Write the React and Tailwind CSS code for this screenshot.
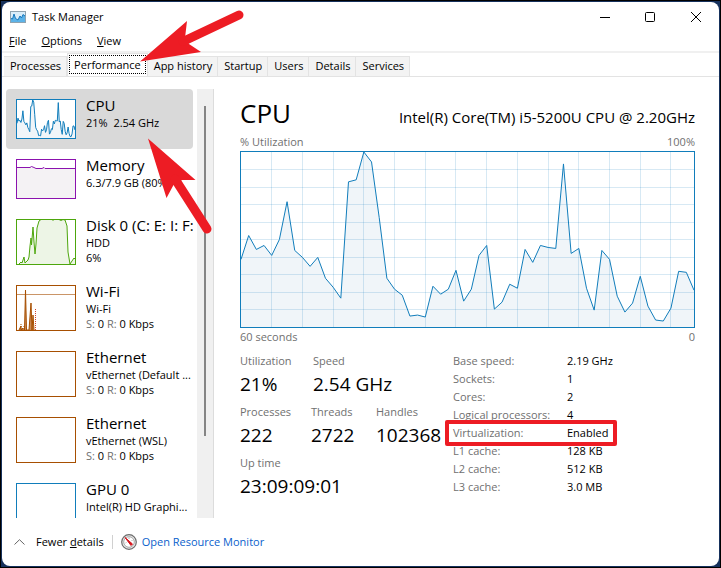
import { useState } from 'react';

// one sample per second, as distance from the top of a 176 unit high plot
const cpuSamples = [
  108, 84, 98, 94, 104, 88, 50, 99, 106, 115, 106, 127, 136, 147, 30, 28, 0, 10, 66, 127,
  138, 144, 165, 164, 166, 135, 143, 138, 119, 150, 138, 104, 94, 158, 151, 133, 137, 98, 111, 94,
  96, 97, 12, 102, 97, 137, 159, 99, 108, 145, 161, 152, 125, 155, 169, 170, 157, 120, 121, 139,
];

const cpuLine = cpuSamples.map((y, i) => `${i * 10},${y}`).join(' ');

const tabs = ['Processes', 'Performance', 'App history', 'Startup', 'Users', 'Details', 'Services'];

const devices = [
  { id: 'cpu', title: 'CPU', lines: ['21%  2.54 GHz'], chart: 'cpu' },
  { id: 'memory', title: 'Memory', lines: ['6.3/7.9 GB (80%)'], chart: 'memory' },
  { id: 'disk', title: 'Disk 0 (C: E: I: F:', lines: ['HDD', '6%'], chart: 'disk' },
  { id: 'wifi', title: 'Wi-Fi', lines: ['Wi-Fi'], net: true, chart: 'wifi' },
  { id: 'eth0', title: 'Ethernet', lines: ['vEthernet (Default ...'], net: true, chart: 'ethernet' },
  { id: 'eth1', title: 'Ethernet', lines: ['vEthernet (WSL)'], net: true, chart: 'ethernet' },
  { id: 'gpu', title: 'GPU 0', lines: ['Intel(R) HD Graphi...', '22%'], chart: 'gpu' },
];

const details = [
  ['Base speed:', '2.19 GHz'],
  ['Sockets:', '1'],
  ['Cores:', '2'],
  ['Logical processors:', '4'],
  ['Virtualization:', 'Enabled'],
  ['L1 cache:', '128 KB'],
  ['L2 cache:', '512 KB'],
  ['L3 cache:', '3.0 MB'],
];

function CpuPlot({ grid }) {
  return (
    <svg viewBox="0 0 590 176" preserveAspectRatio="none" className="block h-full w-full">
      <polygon points={`0,176 ${cpuLine} 590,176`} fill="#f0f5f9" />
      {grid && (
        <g stroke="#117dbb" strokeOpacity="0.17" shapeRendering="crispEdges">
          {Array.from({ length: 14 }, (_, i) => (
            <line key={`v${i}`} x1={(i + 1) * 40} x2={(i + 1) * 40} y1="0" y2="176" vectorEffect="non-scaling-stroke" />
          ))}
          {Array.from({ length: 9 }, (_, i) => (
            <line key={`h${i}`} x1="0" x2="590" y1={(i + 1) * 17.6} y2={(i + 1) * 17.6} vectorEffect="non-scaling-stroke" />
          ))}
        </g>
      )}
      <polyline points={cpuLine} fill="none" stroke="#117dbb" vectorEffect="non-scaling-stroke" />
    </svg>
  );
}

function Thumb({ chart }) {
  if (chart === 'cpu') {
    return (
      <div className="h-10 w-[60px] shrink-0 border border-[#117dbb] bg-white">
        <CpuPlot />
      </div>
    );
  }
  if (chart === 'memory') {
    return (
      <div className="h-10 w-[60px] shrink-0 border border-[#8b12ae] bg-white">
        <svg viewBox="0 0 58 38" className="block h-full w-full">
          <path d="M0 7.5H13L14.5 6.5L17 7.5L19 8.5H25L27 7.5L28 8.5H58V38H0Z" fill="#f4f2f4" />
          <path d="M0 7.5H13L14.5 6.5L17 7.5L19 8.5H25L27 7.5L28 8.5H58" fill="none" stroke="#8b12ae" />
        </svg>
      </div>
    );
  }
  if (chart === 'disk') {
    const disk =
      'M2 44L4 42L5 43L7 37L8 43L11 40L12 37L13 26L14 18L14.5 25L16 7L17 22L18 34L19 24L20 8L22 1L24 -0.5H35L36 0.5L37 -0.5H42L44 0.5L46 -0.5L48 0L50 6L51 32L53 44L55 41L57 38L58 39';
    return (
      <div className="h-[46px] w-[60px] shrink-0 border border-[#4da60c] bg-white">
        <svg viewBox="0 0 58 44" className="block h-full w-full">
          <path d={`${disk}V44Z`} fill="#edf5e6" />
          <path d={disk} fill="none" stroke="#4da60c" />
        </svg>
      </div>
    );
  }
  if (chart === 'wifi') {
    return (
      <div className="h-[46px] w-[60px] shrink-0 border border-[#a74f01] bg-white">
        <svg viewBox="0 0 58 44" className="block h-full w-full" fill="none" stroke="#a74f01">
          <path d="M0 8.5H58" strokeOpacity="0.6" />
          <path d="M2 44L4 40V44L6 42V44H7.5L8.5 4L9.5 44H12L14 17L15 44L16 29L17 44" fill="#c98a58" />
          <path d="M18.5 44V22" strokeDasharray="1 1" stroke="#d0452b" />
          <path d="M4 43V38M7 43V40" strokeDasharray="1 1" />
        </svg>
      </div>
    );
  }
  if (chart === 'gpu') {
    return <div className="h-[46px] w-[60px] shrink-0 border border-[#117dbb] bg-white" />;
  }
  return <div className="h-[46px] w-[60px] shrink-0 border border-[#a74f01] bg-white" />;
}

function DeviceItem({ device, selected, onSelect }) {
  return (
    <button
      onClick={onSelect}
      className={`flex w-full shrink-0 gap-[10px] rounded-sm py-[10px] pl-[10px] text-left ${selected ? 'bg-[#d9d9d9]' : ''}`}
    >
      <Thumb chart={device.chart} />
      <span className="-mt-1 -mb-2 block min-w-0 flex-1 whitespace-pre">
        <span className="block text-[15px] leading-5">{device.title}</span>
        {device.lines.map((line) => (
          <span key={line} className="block leading-[15px]">{line}</span>
        ))}
        {device.net && (
          <span className="block leading-[15px]">
            <span className="text-[#707070]">S:</span> 0 <span className="text-[#707070]">R:</span> 0 Kbps
          </span>
        )}
      </span>
    </button>
  );
}

function Stat({ label, value }) {
  return (
    <div className="mb-1">
      <div className="leading-[18px] text-[#707070]">{label}</div>
      <div className="text-[19px] leading-[29px]">{value}</div>
    </div>
  );
}

function AppIcon() {
  return (
    <svg viewBox="0 0 16 12" className="h-3 w-4">
      <rect x="0.5" y="0.5" width="15" height="11" fill="#d9edf9" stroke="#8fa3b0" />
      <path d="M1 11V7L2.5 8L4 3L5.5 7.5L8 9L10 5L11.5 7L13 3.5L15 5V11Z" fill="#5cb3e8" />
      <path d="M1 7.5L2.5 8L4 3L5.5 7.5L8 9L10 5L11.5 7L13 3.5L15 5" fill="none" stroke="#1878bd" />
    </svg>
  );
}

function MonitorIcon() {
  return (
    <svg viewBox="0 0 16 16" className="h-4 w-4">
      <circle cx="8" cy="8" r="7.3" fill="#e8e8e8" stroke="#6c6c6c" strokeWidth="1.2" />
      <circle cx="8" cy="8" r="5.3" fill="#fff" stroke="#a8a8a8" />
      <path d="M4.5 9L5.5 8.5M8 3.5V5M11.5 6L10.5 7" stroke="#999" strokeWidth="0.8" />
      <path d="M4 3.5L11.5 10L10 11.5Z" fill="#d4141c" stroke="#d4141c" />
    </svg>
  );
}

export default function App() {
  const [tab, setTab] = useState('Performance');
  const [selected, setSelected] = useState('cpu');

  return (
    <div className="h-screen bg-black p-px font-['Open_Sans','Noto_Sans',sans-serif] text-[11px] text-black">
      <div className="relative h-full bg-[#16315c] p-px">
        <div className="flex h-full flex-col overflow-hidden rounded-lg bg-white">
          <header className="flex h-[30px] shrink-0 items-center pl-2">
            <AppIcon />
            <h1 className="ml-[6px] flex-1">Task Manager</h1>
            <button aria-label="Minimize" className="flex h-full w-[45px] items-center justify-center">
              <svg viewBox="0 0 10 10" className="h-[10px] w-[10px]" stroke="#000"><path d="M0 5.5H10" /></svg>
            </button>
            <button aria-label="Maximize" className="flex h-full w-[45px] items-center justify-center">
              <svg viewBox="0 0 10 10" className="h-[10px] w-[10px]" fill="none" stroke="#000">
                <rect x="0.5" y="0.5" width="9" height="9" rx="1" />
              </svg>
            </button>
            <button aria-label="Close" className="flex h-full w-[47px] items-center justify-center">
              <svg viewBox="0 0 10 10" className="h-[10px] w-[10px]" stroke="#000"><path d="M0 0L10 10M10 0L0 10" /></svg>
            </button>
          </header>

          <nav className="flex h-[21px] shrink-0 items-center gap-[15px] border-b-2 border-[#f0f0f0] pl-[7px]">
            <button><u>F</u>ile</button>
            <button><u>O</u>ptions</button>
            <button><u>V</u>iew</button>
          </nav>

          <div role="tablist" className="flex h-6 shrink-0 items-end border-b border-[#e3e3e3] pl-[2px]">
            {tabs.map((name) => (
              <button
                key={name}
                role="tab"
                aria-selected={tab === name}
                onClick={() => setTab(name)}
                className={
                  tab === name
                    ? 'h-[23px] border-x border-t border-[#e3e3e3] bg-white px-px pb-[2px]'
                    : 'h-5 border-t border-r border-[#e3e3e3] bg-[#f3f3f3] pr-[5px] pl-[6px]'
                }
              >
                {tab === name ? (
                  <span className="block border border-dotted border-black px-1 leading-[17px]">{name}</span>
                ) : (
                  name
                )}
              </button>
            ))}
          </div>

          <main className="flex min-h-0 flex-1 pt-3">
            <aside className="flex w-[212px] shrink-0 gap-1 pl-1">
              <div className="flex min-w-0 flex-1 flex-col overflow-hidden">
                {devices.map((device) => (
                  <DeviceItem
                    key={device.id}
                    device={device}
                    selected={selected === device.id}
                    onSelect={() => setSelected(device.id)}
                  />
                ))}
              </div>
              <div className="flex w-[17px] justify-center border-r border-[#dcdcdc] bg-[#f0f0f0] pt-[17px]">
                <div className="h-[80%] w-[2px] bg-[#858585]" />
              </div>
            </aside>

            <section className="min-w-0 flex-1 overflow-hidden pr-6 pl-[26px]">
              <div className="flex items-baseline justify-between pt-1">
                <h2 className="text-[26px] leading-[40px]">CPU</h2>
                <p className="text-[15px]">Intel(R) Core(TM) i5-5200U CPU @ 2.20GHz</p>
              </div>
              <div className="flex justify-between leading-[18px] text-[#707070]">
                <span>% Utilization</span>
                <span>100%</span>
              </div>
              <div className="h-[177px] border border-[#117dbb]">
                <CpuPlot grid />
              </div>
              <div className="flex justify-between leading-[18px] text-[#707070]">
                <span>60 seconds</span>
                <span>0</span>
              </div>

              <div className="mt-[6px] flex">
                <div className="w-[213px] shrink-0">
                  <div className="flex">
                    <div className="w-[73px]"><Stat label="Utilization" value="21%" /></div>
                    <Stat label="Speed" value="2.54 GHz" />
                  </div>
                  <div className="flex">
                    <div className="w-[71px]"><Stat label="Processes" value="222" /></div>
                    <div className="w-[65px]"><Stat label="Threads" value="2722" /></div>
                    <Stat label="Handles" value="102368" />
                  </div>
                  <Stat label="Up time" value="23:09:09:01" />
                </div>
                <table className="h-36 w-[156px] self-start leading-[18px]">
                  <tbody>
                    {details.map(([label, value]) => (
                      <tr key={label} className="relative">
                        <th scope="row" className="w-[114px] p-0 text-left font-normal whitespace-nowrap text-[#707070]">
                          {label}
                        </th>
                        <td className="p-0">
                          <span className="block w-10 whitespace-nowrap">{value}</span>
                          {label === 'Virtualization:' && (
                            <span className="absolute -inset-x-2 -inset-y-1 rounded-xs border-4 border-[#ed1c24]" />
                          )}
                        </td>
                      </tr>
                    ))}
                  </tbody>
                </table>
              </div>
            </section>
          </main>

          <footer className="flex h-12 shrink-0 items-center pl-3">
            <button className="flex items-center gap-[11px]">
              <svg viewBox="0 0 11 6" className="h-[6px] w-[11px]" fill="none" stroke="#666">
                <path d="M0.5 5.5L5.5 0.7L10.5 5.5" />
              </svg>
              <span>Fewer <u>d</u>etails</span>
            </button>
            <span className="mx-2 h-[14px] w-px bg-[#d0d0d0]" />
            <a href="#resource-monitor" className="flex items-center gap-[5px] text-[#0a5fcc]">
              <MonitorIcon />
              Open Resource Monitor
            </a>
          </footer>
        </div>
      </div>

      {/* callout arrows */}
      <svg viewBox="0 0 721 568" className="pointer-events-none absolute top-0 left-0 h-[568px] w-[721px]" fill="#ed1c24">
        <path d="M140 61.5L187 21L185 38L189 44L201 52Z" />
        <path d="M183 41.5L239 15" stroke="#ed1c24" strokeWidth="9" strokeLinecap="round" />
        <path d="M148 138.5L195.5 180L182 180L173.5 185L166.5 198Z" />
        <path d="M175 179L207 229" stroke="#ed1c24" strokeWidth="9" strokeLinecap="round" />
      </svg>
    </div>
  );
}
